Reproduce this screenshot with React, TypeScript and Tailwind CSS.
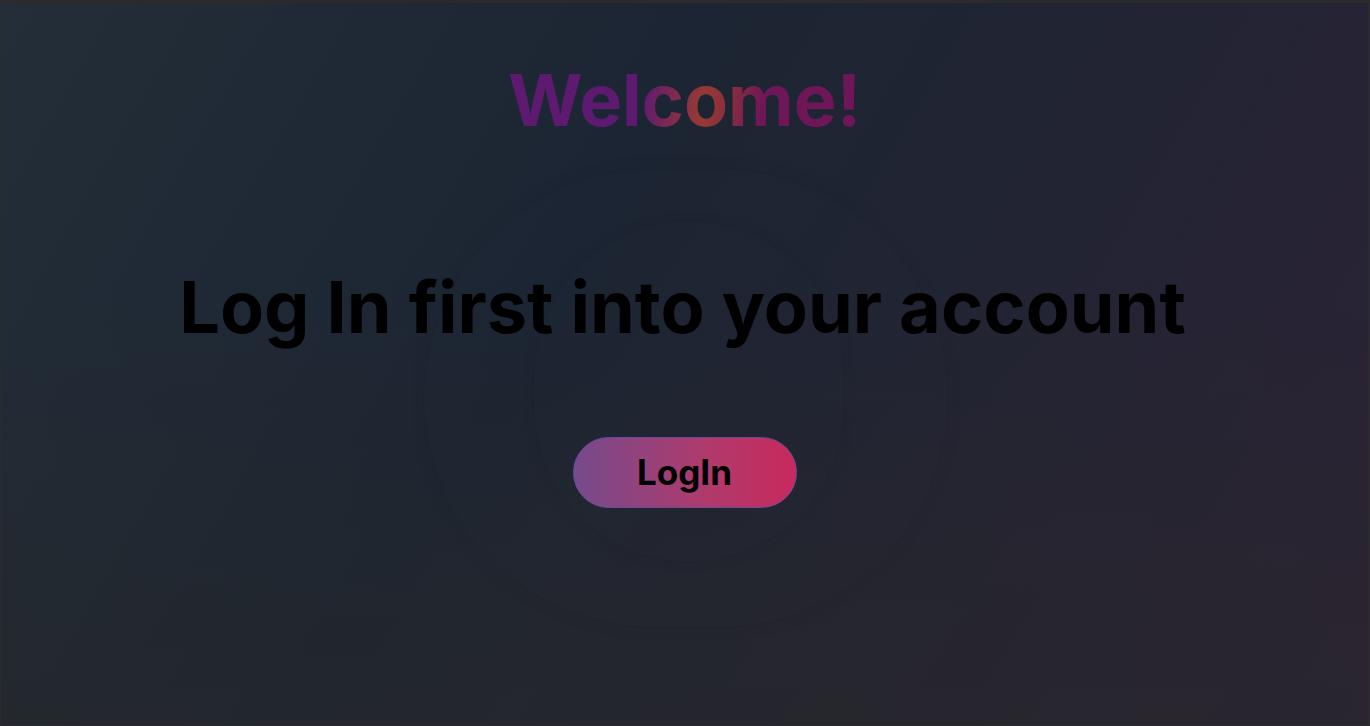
export default function App() {
  return (
    <div className="h-[726px] w-[1370px] overflow-hidden border-t-[3px] border-r-2 border-b border-l border-[#2b2b2b] bg-[#2b2b2b]">
      <div className="relative flex h-full w-full flex-col items-center bg-[linear-gradient(180deg,rgba(40,40,40,0)_40%,rgba(40,40,40,0.55)_100%),linear-gradient(120deg,#232e38_0%,#1c2533_40%,#222433_65%,#2c2236_100%)] font-['Inter',sans-serif]">
        {/* faint rings behind content */}
        <div className="pointer-events-none absolute left-[422px] top-[165px] h-[460px] w-[526px] rounded-full border border-[#1a1d27]/30 shadow-[0_0_18px_rgba(0,0,0,0.05)]" />
        <div className="pointer-events-none absolute left-[532px] top-[217px] h-[343px] w-[312px] rounded-full border border-[#1a1d27]/30 shadow-[0_0_14px_rgba(0,0,0,0.05)]" />

        <h1 className="relative mt-[61px] bg-[linear-gradient(100deg,#5e1a70_0%,#5e1a70_38%,#963934_55%,#8a2f3c_62%,#6e1658_72%,#6e1658_100%)] bg-clip-text text-7xl leading-none font-bold text-transparent">
          Welcome!
        </h1>

        <h2 className="relative mt-[135px] -ml-1 text-7xl leading-none font-bold text-black">
          Log In first into your account
        </h2>

        <button className="relative mt-[94px] flex h-[71px] w-[224px] items-center justify-center rounded-full border border-[#6a4a9c] bg-[linear-gradient(90deg,#764a8c_0%,#b03a6c_60%,#c8295c_100%)] text-[35px] font-bold text-black">
          LogIn
        </button>
      </div>
    </div>
  )
}
